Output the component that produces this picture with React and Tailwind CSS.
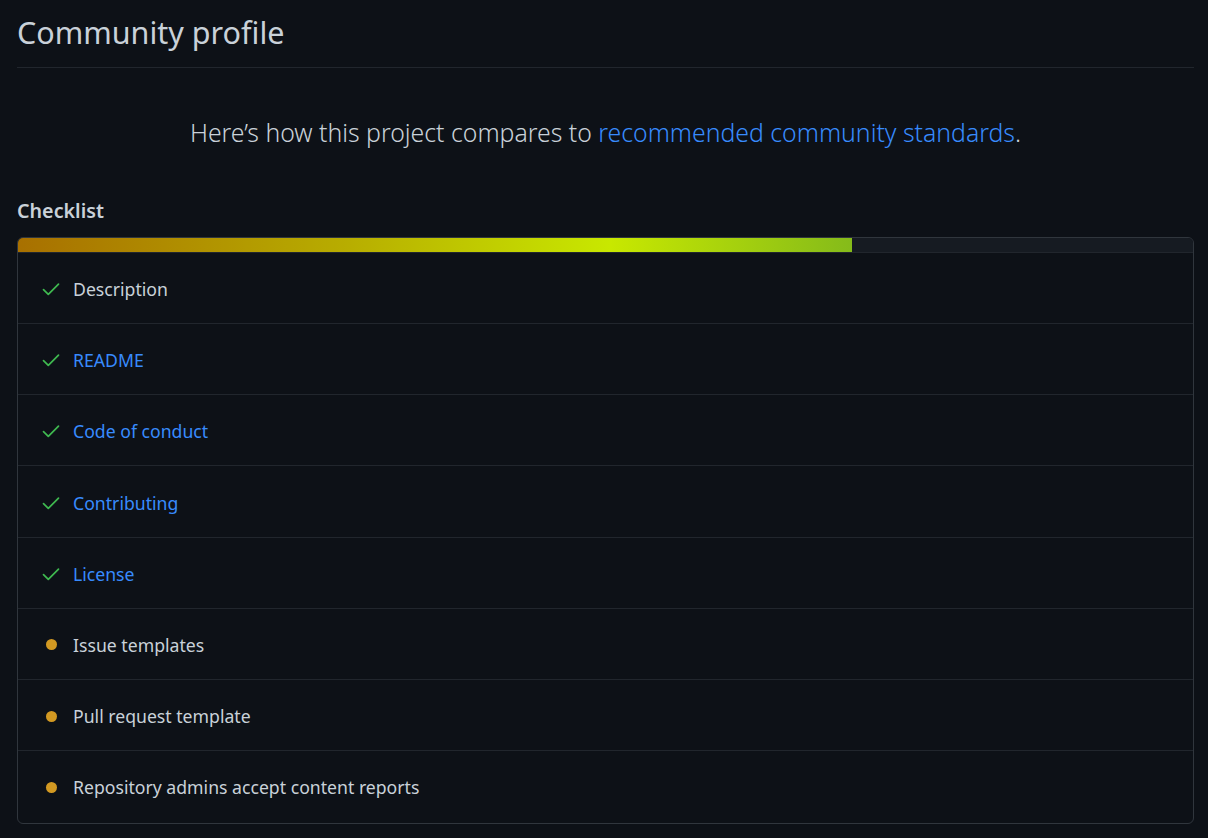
import React from 'react';

const font = "font-['Noto_Sans','Open_Sans',sans-serif]";

const items = [
    { label: 'Description', done: true },
    { label: 'README', done: true, link: true },
    { label: 'Code of conduct', done: true, link: true },
    { label: 'Contributing', done: true, link: true },
    { label: 'License', done: true, link: true },
    { label: 'Issue templates' },
    { label: 'Pull request template' },
    { label: 'Repository admins accept content reports' },
];

const CheckIcon = () => (
    <svg width="18" height="18" viewBox="0 0 18 18" fill="none" className="text-[#3fb950]">
        <path d="M1.5 9.6 6.3 14.4 16.5 4.2" stroke="currentColor" strokeWidth="1.7" strokeLinecap="round" strokeLinejoin="round" />
    </svg>
);

const Row = ({ label, done, link }) => (
    <li className="flex items-center h-[71.17px] first:h-[70.17px] pl-6 pt-[2px] border-t border-[#21262d] first:border-t-0">
        <span className="w-[18px] flex justify-center mr-[13px]">
            {done ? <CheckIcon /> : <span className="w-[11px] h-[11px] rounded-full bg-[#d29922]" />}
        </span>
        {link
            ? <a href="#" className="text-[#388bfd]">{label}</a>
            : <span>{label}</span>}
    </li>
);

const App = () => (
    <div className={`${font} min-h-screen bg-[#0d1117] text-[#c9d1d9] pl-[17px] pr-[14px] pb-[14px] text-[17.65px] leading-6`}>
        <h1 className="pt-[13px] pb-[15px] text-[30.5px] leading-[39px] border-b border-[#21262d]">Community profile</h1>
        <p className="mt-[46px] text-center text-[24.8px] leading-[36px] font-light">
            Here’s how this project compares to <a href="#" className="text-[#388bfd]">recommended community standards</a>.
        </p>
        <h2 className="mt-[47px] text-[19.7px] leading-7 font-semibold">Checklist</h2>
        <div className="mt-[12px] border border-[#30363d] rounded-md overflow-hidden">
            <div className="h-[14px] bg-[#161b22] border-b border-[#21262d] box-content">
                <div className="h-full w-[71%] bg-[linear-gradient(90deg,#a87000_0%,#b8ae00_40%,#c8e800_71%,#85bb1a_100%)]" />
            </div>
            <ul className="pb-[2px]">
                {items.map((item) => <Row key={item.label} {...item} />)}
            </ul>
        </div>
    </div>
);

export default App;
